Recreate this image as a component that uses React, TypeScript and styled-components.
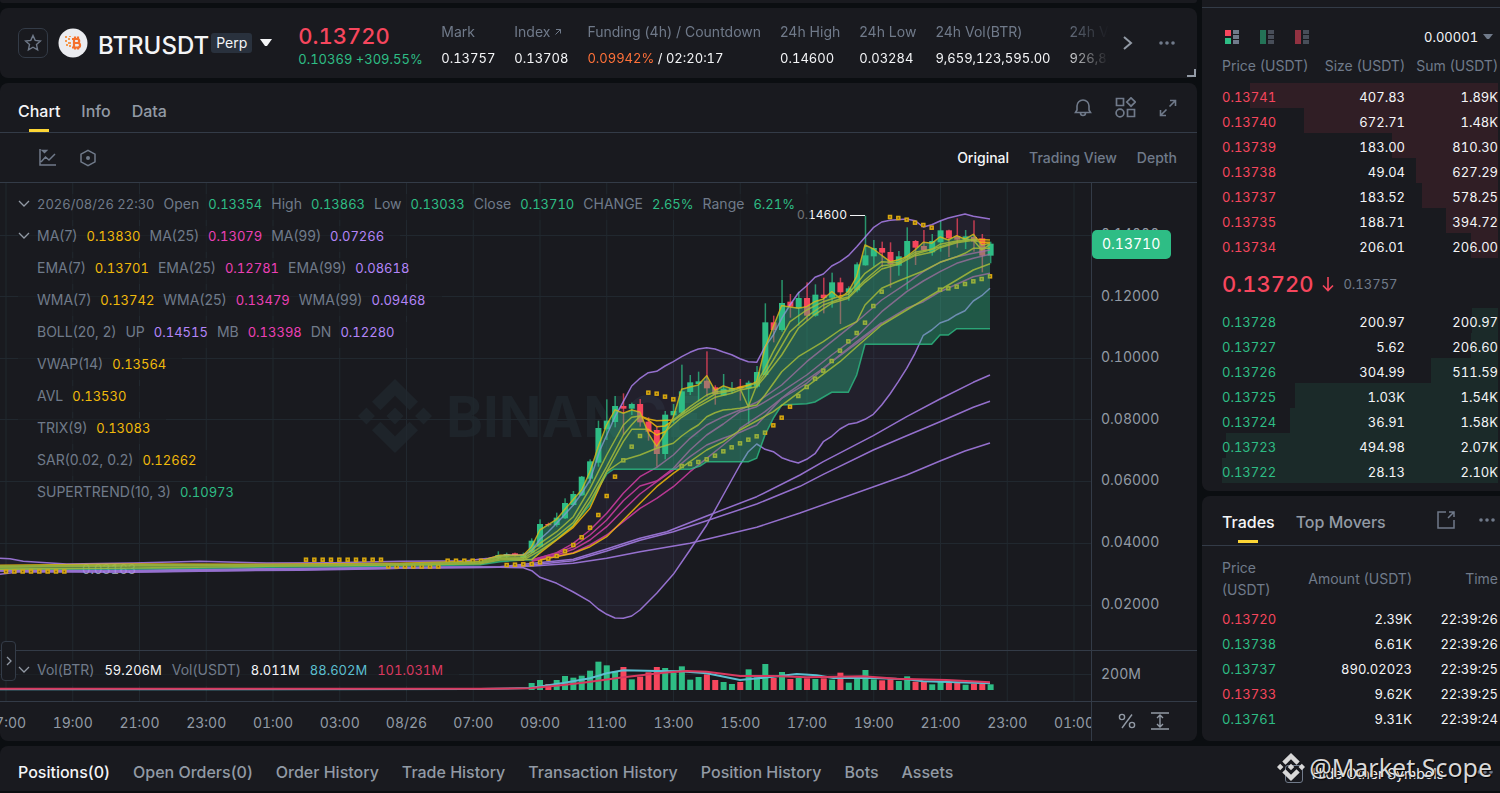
import React from "react";
import styled, { createGlobalStyle } from "styled-components";

const up = "#2ebd85", down = "#f6465d", yellow = "#f0b90b", purple = "#b385f8", pink = "#eb40b5";
const muted = "#707a8a", muted2 = "#929aa5", line = "#333b47", panel = "#191a1f", white = "#f4f5f7";

const Global = createGlobalStyle`
  * { box-sizing: border-box; }
  body { margin: 0; background: #0b0e11; color: ${white}; font: 14px/20px Inter, "Liberation Sans", sans-serif; overflow-x: hidden; }
  button { font: inherit; color: inherit; background: none; border: 0; padding: 0; margin: 0; }
  a { color: inherit; text-decoration: none; }
  svg { display: block; }
  table { border-collapse: collapse; }
`;
const digits = `font-size: 13px; font-variant-numeric: tabular-nums;`;
const bigDigits = `font-size: 22px; font-weight: 500; font-variant-numeric: tabular-nums;`;

const Page = styled.div`display: flex; flex-direction: column; gap: 5px; min-height: 100vh;`;
const Upper = styled.div`display: flex; gap: 5px;`;
const Main = styled.main`flex: 1; min-width: 0; display: flex; flex-direction: column; gap: 5px;`;
const Side = styled.aside`width: 298px; flex: none; display: flex; flex-direction: column; gap: 5px;`;
const Panel = styled.section`background: ${panel}; border-radius: 8px; position: relative; overflow: hidden;`;
const Strip = styled.div`height: 3px; background: ${panel}; border-radius: 0 0 8px 8px;`;

const Ticker = styled(Panel)`display: flex; align-items: center; height: 70px; padding: 0 21px 0 18px; overflow: visible;`;
const StarButton = styled.button`width: 30px; height: 30px; border: 1px solid ${line}; border-radius: 7px; display: grid; place-items: center; color: ${muted};`;
const CoinLogo = styled.svg`margin-left: 10px;`;
const Symbol = styled.h1`margin: 5px 2px 0 10px; font-size: 24px; line-height: 32px; font-weight: 500;`;
const Tag = styled.span`background: #29313d; border-radius: 3px; padding: 0 5px; height: 20px;`;
const SymbolButton = styled.button`margin: 0 26px 0 8px;`;
const Last = styled.div`width: 123px; margin-right: 20px; padding-top: 5px; color: ${up}; white-space: nowrap; ${digits}`;
const LastPrice = styled.div`${bigDigits} line-height: 26px; color: ${down};`;
const Stats = styled.dl`flex: 1; min-width: 0; margin: 0; padding-top: 4px; display: flex; gap: 19px; overflow: hidden; white-space: nowrap; mask-image: linear-gradient(to right, #000 calc(100% - 46px), transparent);`;
const Stat = styled.div`flex: none; dt { color: ${muted}; margin-bottom: 6px; display: flex; gap: 5px; } dd { margin: 0; ${digits} }`;
const Orange = styled.span`color: #ff7139;`;
const IconButton = styled.button<{ $gap?: number }>`margin-left: ${p => p.$gap ?? 0}px; color: ${muted};`;
const Corner = styled.span`position: absolute; right: 1px; bottom: 1px; width: 9px; height: 8px; border: solid ${muted2}; border-width: 0 2px 2px 0;`;

const TabBar = styled.div`display: flex; align-items: center; height: 50px; padding: 6px 20px 0 18px; border-bottom: 1px solid ${line}; > button { margin-bottom: 6px; }`;
const TradeBar = styled(TabBar)`padding: 4px 4px 2px 20px; > button { margin-bottom: 4px; }`;
const Tabs = styled.nav<{ $gap?: number }>`display: flex; gap: ${p => p.$gap ?? 21}px; flex: 1; align-self: stretch; font-size: 16px; font-weight: 500; white-space: nowrap;`;
const Tab = styled.a<{ $on?: boolean; $plain?: boolean }>`
  display: flex; align-items: center; position: relative; color: ${p => (p.$on ? white : muted2)};
  &::after { content: ""; display: ${p => (p.$on && !p.$plain ? "block" : "none")}; position: absolute; bottom: 0; left: calc(50% - 10px); width: 20px; height: 3px; background: #fcd535; }
`;
const ToolBar = styled.div`display: flex; align-items: center; height: 50px; padding: 0 20px 0 37px; border-bottom: 1px solid ${line}; color: ${muted};`;
const ModeLink = styled.a<{ $on?: boolean }>`margin-left: 20px; font-weight: 500; color: ${p => (p.$on ? white : muted)};`;
const Spacer = styled.div`flex: 1;`;

const ChartBox = styled.div`position: relative; height: 558px; overflow: hidden;`;
const Plot = styled.svg`width: 100%; height: 558px; text { font-family: Inter, "Liberation Sans", sans-serif; font-size: 14px; font-variant-numeric: tabular-nums; }`;
const Legend = styled.div<{ $top: number }>`position: absolute; left: 18px; top: ${p => p.$top}px; display: flex; flex-direction: column; gap: 6px; align-items: flex-start;`;
const LegendRow = styled.div<{ $fold?: boolean; $gap?: number }>`display: flex; gap: ${p => p.$gap ?? 9}px; padding: 0 16px 6px ${p => (p.$fold ? 0 : 19)}px; background: rgba(25, 26, 31, 0.6); color: ${muted}; white-space: nowrap; svg { margin: 5px ${p => 7 - (p.$gap ?? 9)}px 0 0; }`;
const Value = styled.span<{ $c: string }>`color: ${p => p.$c}; ${digits}`;
const Expander = styled.button`position: absolute; left: 1px; top: 458px; width: 15px; height: 40px; border: 1px solid ${line}; border-radius: 4px; background: ${panel}; color: ${muted2}; display: grid; place-items: center;`;

const BookPanel = styled(Panel)`height: 491px; padding: 0 2px 0 20px; border-radius: 0 0 0 8px;`;
const BookTop = styled.div`height: 8px; border-bottom: 1px solid ${line}; margin: 0 -2px 0 -20px;`;
const BookTools = styled.div`display: flex; align-items: center; gap: 20px; height: 44px; padding: 14px 5px 0 3px;`;
const Precision = styled.select`appearance: none; border: 0; background: none; color: ${white}; font: inherit; ${digits} padding: 0; width: 54px;`;
const PrecisionLabel = styled.label`display: flex; align-items: center; gap: 5px; margin-left: auto;`;
const Book = styled.table`
  width: 100%; table-layout: fixed;
  th { font-weight: 400; color: ${muted}; text-align: right; height: 31px; padding: 0 0 4px; white-space: nowrap; &:first-child { text-align: left; } }
  td { padding: 2px 0 0; height: 25px; text-align: right; ${digits} &:first-child { text-align: left; } }
`;
const Level = styled.tr<{ $c: string; $bg: string }>`td:first-child { color: ${p => p.$c}; } background-image: linear-gradient(${p => p.$bg}, ${p => p.$bg}); background-repeat: no-repeat; background-position: right;`;
const Mid = styled.div`display: flex; align-items: center; height: 50px; padding-top: 2px; gap: 8px; color: ${muted}; ${digits} strong { ${bigDigits} color: ${down}; }`;

const TradesPanel = styled(Panel)`flex: 1; border-radius: 8px 0 0 8px;`;
const TradesTable = styled.table`
  width: 276px; margin: 11px 0 0 20px; table-layout: fixed;
  th { font-weight: 400; color: ${muted}; line-height: 22px; height: 49px; padding: 11px 0 0; text-align: right; vertical-align: top; white-space: nowrap; }
  th:first-child { text-align: left; white-space: normal; padding-top: 0; }
  td { height: 25px; padding: 0; text-align: right; ${digits} }
  td:first-child { text-align: left; }
`;

const Bottom = styled(Panel)`height: 45px; border-radius: 8px 0 0 0; display: flex; align-items: center; padding: 7px 6px 0 18px;`;
const Hide = styled.label`display: flex; align-items: center; gap: 9px; margin-right: 12px; padding-top: 3px; white-space: nowrap; input { appearance: none; margin: 0; width: 18px; height: 18px; border: 1px solid ${muted}; border-radius: 3px; }`;
const Credit = styled.div`position: absolute; right: 8px; top: 5px; display: flex; align-items: center; gap: 4px; font: 25px/32px "Noto Sans", sans-serif; color: #d8d8d8; text-shadow: 1px 1px 1px #000; white-space: nowrap;`;

/* price chart data: candle slot, body top and bottom, wick top and bottom, rising or not */
const X = (k: number) => 540 + k * 8.345;
const a9 = (y: number) => 330 + y / 3;
const a10 = (y: number) => 195 + y / 3;
const early = [
  [-5, 675, 684, 664, 688, 1], [-4, 672, 680, 668, 684, 1], [-3, 670, 676, 668, 680, 0], [-2, 674, 684, 668, 688, 1],
  [-1, 632, 668, 625, 670, 1], [0, 582, 650, 568, 650, 1], [1, 582, 586, 578, 590, 0], [2, 563, 585, 548, 590, 1], [3, 519, 565, 505, 567, 1],
  [4, 492, 525, 483, 527, 1], [5, 440, 496, 438, 498, 1], [6, 394, 446, 388, 460, 1], [7, 294, 398, 272, 410, 1], [8, 272, 298, 208, 330, 1],
  [9, 228, 276, 198, 292, 1], [10, 228, 236, 190, 314, 0], [11, 222, 236, 218, 255, 1], [12, 222, 277, 207, 290, 0], [13, 275, 305, 262, 332, 0],
  [14, 300, 372, 290, 410, 0], [15, 254, 372, 243, 388, 1], [16, 243, 256, 222, 280, 1], [17, 184, 248, 104, 252, 1], [18, 157, 186, 135, 195, 1],
  [19, 154, 162, 125, 214, 1], [20, 152, 175, 64, 200, 0], [21, 172, 192, 166, 224, 0], [22, 176, 196, 132, 198, 1], [23, 174, 182, 156, 190, 1],
  [24, 170, 176, 147, 212, 0], [25, 158, 175, 152, 282, 1], [26, 126, 170, 108, 175, 1],
];
const late = [
  [27, 382, 540, 325, 545, 1], [28, 382, 405, 362, 442, 0], [29, 324, 405, 255, 410, 1], [30, 320, 335, 297, 368, 0], [31, 309, 340, 290, 392, 1],
  [32, 309, 362, 262, 378, 0], [33, 299, 362, 268, 365, 1], [34, 299, 309, 248, 355, 0], [35, 262, 308, 233, 338, 1], [36, 262, 292, 248, 387, 0],
  [37, 280, 292, 274, 317, 1], [38, 208, 286, 202, 292, 1], [39, 181, 211, 62, 212, 1], [40, 159, 184, 135, 215, 1], [41, 159, 173, 140, 217, 0],
  [42, 171, 207, 142, 278, 0], [43, 184, 212, 168, 242, 1], [44, 138, 188, 97, 284, 1], [45, 138, 158, 135, 210, 0], [46, 153, 166, 105, 168, 0],
  [47, 138, 172, 117, 182, 1], [48, 106, 142, 78, 170, 1], [49, 106, 130, 104, 186, 0], [50, 124, 134, 70, 158, 0], [51, 124, 136, 105, 162, 1],
  [52, 126, 140, 76, 170, 0], [53, 130, 182, 117, 232, 0], [54, 146, 182, 140, 205, 1],
];
const candles = [
  ...early.map(([k, t, b, h, l, g]) => ({ k, t: a9(t), b: a9(b), h: a9(h), l: a9(l), g })),
  ...late.map(([k, t, b, h, l, g]) => ({ k, t: a10(t), b: a10(b), h: a10(h), l: a10(l), g })),
];

/* polylines: three stretches, each with its own origin, in thirds of a pixel */
const seg = (ox: number, oy: number, s: string) =>
  s.trim().split(/\s+/).filter(Boolean).map(p => { const [x, y] = p.split(",").map(Number); return `${(ox + x / 3).toFixed(1)},${(oy + y / 3).toFixed(1)}`; }).join(" ");
const path = (l: string, m: string, r: string) => [seg(0, 520, l), seg(500, 330, m), seg(740, 195, r)].filter(Boolean).join(" ");

const bollUp = path("0,115 30,116 70,124 140,128 200,132 400,129 600,124 800,129 1000,128 1200,124 1400,122 1465,115",
  "20,675 70,675 95,662 120,628 145,605 170,580 195,553 220,525 245,490 270,450 300,360 345,260 370,215 395,168 420,145 445,128 470,124 495,108 520,95 545,80 570,67 595,57 620,53 645,57 670,66 695,74",
  "0,491 25,500 50,502 75,455 100,420 125,370 150,330 175,294 200,272 225,247 250,237 275,213 300,200 325,182 350,155 375,127 400,98 425,81 450,76 500,72 525,77 550,96 575,89 600,78 625,69 675,57 700,64 750,72");
const bollDn = path("0,163 60,155 400,157 700,152 900,151 1150,146 1300,142 1500,142",
  "70,713 95,722 120,742 170,760 220,786 270,815 295,837 320,853 345,864 370,865 395,858 420,840 470,790 520,733 570,660 620,585 670,495 720,405 745,365",
  "50,747 75,763 100,770 125,788 150,797 175,804 200,793 225,776 250,740 275,724 300,702 325,688 350,683 375,673 400,658 425,630 450,597 475,560 500,520 525,475 550,421 575,405 600,384 625,375 650,359 675,347 700,318 725,302 750,280");
const trend = path("0,148 400,147 800,142 1200,138 1440,134", "0,695 70,690 95,690 120,665 170,628 220,585 270,525 295,475 320,432 340,418 570,418 600,408 620,395 740,395",
  "25,800 50,790 75,720 100,670 125,630 200,626 225,621 275,592 325,592 350,540 375,448 575,448 600,420 625,420 650,401 750,401");
const price = path("0,136 400,132 800,133 1200,130 1440,124", "0,676 70,676 95,650 120,600 170,568 195,538 245,480 270,425 295,350 320,285 345,240 370,250 395,240 420,247 445,310 470,350 495,310 520,262 545,178 595,165 620,137 645,182 670,168 695,176 720,175",
  "25,572 50,560 75,460 100,395 125,332 175,340 200,335 225,320 250,312 275,290 300,310 325,290 350,245 375,150 400,162 450,200 475,195 500,185 525,165 550,142 575,145 600,126 625,135 650,122 675,133 700,118 725,150 750,145");
const yellowLines = [
  price,
  path("0,139 400,134 800,135 1200,131 1440,126", "0,680 70,682 120,640 170,605 220,560 270,475 320,375 370,285 395,262 420,258 445,267 470,272 520,270 570,230 620,195 645,186 695,180",
    "0,576 50,565 75,520 100,470 150,380 200,345 250,320 300,303 325,298 375,235 425,200 475,203 525,172 575,163 600,148 650,138 700,133 750,135"),
  path("0,142 400,138 800,137 1200,133 1440,130", "0,684 70,686 120,652 170,618 220,578 270,500 320,410 370,315 395,284 420,258 445,270 470,290 495,288 545,255 595,222 645,192 695,182",
    "0,580 25,635 50,570 75,535 100,495 150,410 200,365 250,330 300,312 325,306 375,255 425,212 475,207 525,182 575,172 600,158 650,143 700,136 725,142 750,142"),
  path("0,140 400,136 800,136 1200,132 1440,129", "0,686 70,690 120,662 170,628 220,588 270,515 320,425 370,335 395,298 445,298 470,315 495,305 545,262 595,230 645,202 695,190",
    "0,585 50,575 75,545 125,480 175,400 225,358 275,325 325,310 375,262 425,222 475,208 525,178 600,155 650,140 700,135 725,165 750,148"),
  path("0,147 400,144 800,139 1200,135 1440,131", "0,690 95,688 170,630 220,592 270,535 320,425 370,390 420,375 470,355 520,340 545,318 570,300 595,285 620,260 645,248 670,240 695,238",
    "0,640 50,630 75,600 125,530 175,485 250,440 300,405 350,380 375,330 425,280 475,258 550,228 600,202 650,185 675,175 700,160 750,160"),
  path("", "120,690 220,670 270,650 320,620 370,570 420,520 470,470 520,430 570,395 620,360 670,335", "0,705 100,650 200,575 300,500 350,455 425,390 500,345 600,285 650,255 700,225 750,206"),
];
const pinkLines = [
  path("", "95,690 170,668 220,640 270,600 320,550 370,490 420,440 470,412 520,375 570,325 620,285 670,260", "0,645 50,622 125,570 200,500 275,440 350,380 425,315 500,265 550,230 600,202 650,185 700,175 750,165"),
  path("", "95,690 170,670 220,650 270,615 320,570 370,512 420,468 470,453 520,415 570,360 620,315 670,282", "0,650 50,635 125,590 200,540 275,480 350,425 425,350 500,290 550,258 600,230 650,205 700,190 750,178"),
  path("", "95,692 170,675 220,658 270,630 320,590 370,540 420,492 470,455 520,420 570,380 620,345 670,325", "0,712 50,690 125,610 200,565 275,500 350,445 425,385 500,340 550,320 600,290 650,268 700,245 750,235"),
  path("", "95,694 220,668 270,645 320,615 370,575 420,535 470,505 520,470 570,425 620,385 670,345 710,312", "0,700 75,650 150,590 250,520 350,440 425,383"),
];
const purpleLines = [
  path("0,150 400,151 800,146 1200,142 1500,140", "100,700 220,688 320,657 420,625 500,605 620,558 770,500", "180,840 250,800 400,722 500,665 600,612 700,562 750,540"),
  path("0,152 400,153 800,148 1200,144 1500,142", "100,704 220,692 320,663 420,631 520,605 620,572 770,522", "180,874 250,838 400,765 500,722 600,680 700,637 750,619"),
  path("0,153 400,155 800,150 1200,145 1500,142", "100,708 220,700 320,685 420,665 570,640 770,592", "180,954 500,840 600,798 675,768 750,744"),
];
const dots = [
  ...[18, 43, 68, 93, 118, 143, 168, 193].map(x => [x / 3, 571.5]),
  ...Array.from({ length: 10 }, (_, i) => [(918 + i * 25) / 3, 559.7]),
  ...Array.from({ length: 5 }, (_, i) => [(1343 + i * 25) / 3, 560.7]),
  ...Array.from({ length: 7 }, (_, i) => [(1165 + i * 25) / 3, 566.5]),
  ..."20,705 45,704 70,703 95,702 120,697 145,686 170,678 195,664 220,645 245,622 270,593 295,555 320,498 345,440 370,391 395,350 420,318 445,188 470,191 495,200 520,208 545,408 570,402 595,396 620,388 645,377 670,364 695,352 720,340 745,329 770,319 795,308 820,286 845,263 870,230 895,198"
    .split(" ").map(p => { const [x, y] = p.split(",").map(Number); return [500 + x / 3, 330 + y / 3]; }),
  ..."200,576 225,551 250,527 275,498 300,467 325,439 350,414 375,383 400,333 425,290 450,66 475,69 500,74 525,83 550,90 575,98 600,284 625,280 650,275 675,267 700,259 725,252 750,244"
    .split(" ").map(p => { const [x, y] = p.split(",").map(Number); return [740 + x / 3, 195 + y / 3]; }),
];
const volumes = "609g 600g 612r 600g 588g 593g 587g 572g 545g 556g 574g 561r 598g 590r 577r 561r 564g 578g 559g 599g 591g 583r 600r 606g 612g 606r 568g 592g 552g 594r 576g 597r 594g 595r 597g 595r 599g 578r 608g 594g 570g 598g 601r 598r 603g 589g 605r 605r 613g 606g 608r 609r 614g 611r 612r 613g".split(" ");
const volBlue = seg(480, 480, "-1440,628 0,627 150,624 250,609 330,595 380,580 430,571 530,573 600,574 680,580 780,600 880,590 950,582 1010,586 1060,594 1180,594 1280,598 1330,604 1530,610");
const volRed = seg(480, 480, "-1440,626 0,626 150,625 250,615 320,607 430,592 550,578 620,573 680,575 780,588 880,588 980,592 1150,589 1250,596 1400,600 1530,607");
const reverse = (s: string) => s.split(" ").reverse().join(" ");
const times = ["17:00", "19:00", "21:00", "23:00", "01:00", "03:00", "08/26", "07:00", "09:00", "11:00", "13:00", "15:00", "17:00", "19:00", "21:00", "23:00", "01:00"];

const diamond = "M38.2 53.2 63 28.4l24.8 24.8 14.4-14.4L63 0 23.8 38.8zM0 63l14.4-14.4L28.8 63 14.4 77.4zM38.2 72.8 63 97.6l24.8-24.8 14.4 14.4L63 126 23.8 87.2zM97.2 63l14.4-14.4L126 63l-14.4 14.4zM77.6 63 63 48.4 48.4 63 63 77.6z";
const Fold = () => <svg width="12" height="9" fill="none" stroke={muted2} strokeWidth="1.3"><path d="M1 2l5 5 5-5" /></svg>;
const Dots = () => <svg width="18" height="6" fill={muted}><circle cx="3" cy="3" r="1.8" /><circle cx="9" cy="3" r="1.8" /><circle cx="15" cy="3" r="1.8" /></svg>;

const PriceChart = () => (
  <Plot viewBox="0 183 1197 558" preserveAspectRatio="xMaxYMin slice" role="img" aria-label="Price chart">
    <g fill="#1e242a">
      <svg x="358" y="379" width="74" height="74" viewBox="0 0 126 126"><path d={diamond} /></svg>
      <text x="446" y="437" style={{ fontSize: 56, fontWeight: 700 }}>BINANCE</text>
    </g>
    <g stroke="#21282f">
      {times.map((_, i) => <path key={i} d={`M${6 + i * 66.75} 183V701`} />)}
      {[235, 296, 358, 419, 481, 543, 605, 674].map(y => <path key={y} d={`M0 ${y + 0.5}H1091`} />)}
    </g>
    <text x="82" y="574" fill={muted2} style={{ fontSize: 13 }}>0.03163</text>
    <polygon points={`${bollUp} ${reverse(bollDn)}`} fill={purple} opacity=".06" />
    {candles.map(c => (
      <g key={c.k} fill={c.g ? up : down}>
        <rect x={X(c.k) - 0.7} y={c.h} width="1.5" height={c.l - c.h} opacity=".75" />
        <rect x={X(c.k) - 3} y={c.t} width="6" height={c.b - c.t} />
      </g>
    ))}
    <g fill="none" strokeWidth="1.5" strokeLinejoin="round">
      <g stroke={pink} opacity=".75">{pinkLines.map((p, i) => <polyline key={i} points={p} />)}</g>
      <g stroke={purple} opacity=".8">{[...purpleLines, bollUp, bollDn].map((p, i) => <polyline key={i} points={p} />)}</g>
    </g>
    <polyline points={trend} fill="none" stroke={up} strokeWidth="1.5" opacity=".8" />
    <g fill="none" strokeWidth="1.5" strokeLinejoin="round" stroke={yellow} opacity=".85">{yellowLines.map((p, i) => <polyline key={i} points={p} />)}</g>
    {dots.map(([x, y], i) => <rect key={i} x={x - 1.5} y={y - 1.5} width="3" height="3" fill="#7a5f14" stroke="#d9a80f" strokeWidth="1.5" />)}
    <polygon points={`${price} ${reverse(trend)}`} fill={up} opacity=".38" />
    <path d="M850 215.5H865" stroke={white} />
    <text x="797" y="219" fill={white} style={{ fontSize: 12 }}>0.14600</text>
    {volumes.map((v, i) => {
      const y = 480 + parseInt(v) / 3;
      return <rect key={i} x={X(i - 1) - 3} y={y} width="6" height={690 - y} fill={v.endsWith("g") ? up : down} />;
    })}
    <g fill="none" strokeWidth="2"><polyline points={volBlue} stroke="#5bbfd0" /><polyline points={volRed} stroke="#d9395f" /></g>
    <path d="M0 650.5H1197M0 701.5H1197M1091.5 183V741" stroke={line} />
    <g fill={muted2}>
      {["0.14000", "0.12000", "0.10000", "0.08000", "0.06000", "0.04000", "0.02000"].map((t, i) => <text key={t} x="1101" y={Math.round(239 + i * 61.6)}>{t}</text>)}
      <text x="1101" y="679">200M</text>
      <svg x="0" y="702" width="1091" height="39" viewBox="0 702 1091 39">
        {times.map((t, i) => <text key={i} x={6 + i * 66.75} y="728" textAnchor="middle">{t}</text>)}
      </svg>
    </g>
    <g fill="none" stroke={muted2} strokeWidth="1.4">
      <circle cx="1122" cy="717" r="2.6" /><circle cx="1132" cy="725" r="2.6" /><path d="M1132 714.500L1122 728" />
      <path d="M1151 713h18M1151 729h18M1160 715.500v11M1157 718l3-3 3 3M1157 724l3 3 3-3" />
    </g>
    <rect x="1092" y="230" width="79" height="29" rx="5" fill={up} />
    <text x="1102" y="249" fill="#fff">0.13710</text>
  </Plot>
);

type Item = [string, string, string];
const indicators: Item[][] = [
  [["MA(7)", "0.13830", yellow], ["MA(25)", "0.13079", pink], ["MA(99)", "0.07266", purple]],
  [["EMA(7)", "0.13701", yellow], ["EMA(25)", "0.12781", pink], ["EMA(99)", "0.08618", purple]],
  [["WMA(7)", "0.13742", yellow], ["WMA(25)", "0.13479", pink], ["WMA(99)", "0.09468", purple]],
  [["BOLL(20, 2)", "", ""], ["UP", "0.14515", purple], ["MB", "0.13398", pink], ["DN", "0.12280", purple]],
  [["VWAP(14)", "0.13564", yellow]], [["AVL", "0.13530", yellow]], [["TRIX(9)", "0.13083", yellow]], [["SAR(0.02, 0.2)", "0.12662", yellow]], [["SUPERTREND(10, 3)", "0.10973", up]],
];
const candleInfo: Item[] = [["", "2026/08/26 22:30", muted], ["Open", "0.13354", up], ["High", "0.13863", up], ["Low", "0.13033", up], ["Close", "0.13710", up], ["CHANGE", "2.65%", up], ["Range", "6.21%", up]];
const volInfo: Item[] = [["Vol(BTR)", "59.206M", white], ["Vol(USDT)", "8.011M", white], ["", "88.602M", "#5bbfd0"], ["", "101.031M", "#d9395f"]];
const Items = ({ items }: { items: Item[] }) => (
  <>{items.map(([l, v, c]) => <React.Fragment key={l + v}>{l && <span>{l}</span>}{v && <Value $c={c}>{v}</Value>}</React.Fragment>)}</>
);

const asks = [["0.13741", "407.83", "1.89K", 248], ["0.13740", "672.71", "1.48K", 194], ["0.13739", "183.00", "810.30", 106], ["0.13738", "49.04", "627.29", 82], ["0.13737", "183.52", "578.25", 76], ["0.13735", "188.71", "394.72", 52], ["0.13734", "206.01", "206.00", 27]];
const bids = [["0.13728", "200.97", "200.97", 26], ["0.13727", "5.62", "206.60", 27], ["0.13726", "304.99", "511.59", 67], ["0.13725", "1.03K", "1.54K", 203], ["0.13724", "36.91", "1.58K", 208], ["0.13723", "494.98", "2.07K", 272], ["0.13722", "28.13", "2.10K", 276]];
const trades = [["0.13720", "2.39K", "22:39:26", down], ["0.13738", "6.61K", "22:39:26", up], ["0.13737", "890.02023", "22:39:25", up], ["0.13733", "9.62K", "22:39:25", down], ["0.13761", "9.31K", "22:39:24", up]];
const stats: [string, React.ReactNode][] = [
  ["Mark", "0.13757"],
  ["Index", "0.13708"],
  ["Funding (4h) / Countdown", <><Orange>0.09942%</Orange> / 02:20:17</>],
  ["24h High", "0.14600"], ["24h Low", "0.03284"], ["24h Vol(BTR)", "9,659,123,595.00"], ["24h Vol(USDT)", "926,829,140.51"],
];
const Levels = ({ rows, c, bg }: { rows: (string | number)[][]; c: string; bg: string }) => (
  <>{rows.map(([p, s, sum, w]) => <Level key={p} $c={c} $bg={bg} style={{ backgroundSize: `${(Number(w) / 276) * 100}% 100%` }}><td>{p}</td><td>{s}</td><td>{sum}</td></Level>)}</>
);
const Col = styled.col<{ $w: number }>`width: ${p => p.$w}px;`;
const Cols = () => <colgroup><Col $w={90} /><Col $w={93} /><Col $w={93} /></colgroup>;
const BookIcon = ({ kind }: { kind: "both" | "buy" | "sell" }) => (
  <svg width="15" height="14" opacity={kind === "both" ? 1 : 0.55}>
    {kind === "both" ? <><rect width="6" height="6" fill={down} /><rect y="8" width="6" height="6" fill={up} /></> : <rect width="6" height="14" fill={kind === "buy" ? up : down} />}
    <path d="M8 0h6v4H8zM8 5h6v4H8zM8 10h6v4H8z" fill={muted} />
  </svg>
);

export default function App() {
  return (
    <>
      <Global />
      <Page>
        <Upper>
          <Main>
            <Strip />
            <Ticker>
              <StarButton aria-label="Favourite"><svg width="18" height="18" viewBox="0 0 18 18" fill="none" stroke="currentColor" strokeWidth="1.4"><path d="M9 1.5l2.2 4.9 5.3.6-4 3.6 1.1 5.3L9 13.2l-4.6 2.7 1.1-5.3-4-3.6 5.3-.6z" /></svg></StarButton>
              <CoinLogo width="30" height="30" viewBox="0 0 30 30">
                <circle cx="15" cy="15" r="14.5" fill="#ebecf0" />
                <g fill="none" stroke="#f4702c" strokeWidth="2.2"><path d="M14 11h5.2a1.9 1.9 0 0 1 0 4H15h4.8a2.2 2.2 0 0 1 0 4.500H14M16 10v10M17 8.500v2M20 8.500v2M17 19.500v2M20 19.500v2" /></g>
                <path d="M7 8h2v2H7zM10 10h2v2h-2zM7 12h2v2H7zM10 14h3v2h-3zM8 16h2v2H8zM11 17h2v2h-2zM11 8h2v1h-2z" fill="#f59a50" />
              </CoinLogo>
              <Symbol>BTRUSDT</Symbol>
              <Tag>Perp</Tag>
              <SymbolButton aria-label="Choose symbol"><svg width="12" height="8" fill={white}><path d="M0 0h12L7 7H5z" /></svg></SymbolButton>
              <Last><LastPrice>0.13720</LastPrice>0.10369 +309.55%</Last>
              <Stats>
                {stats.map(([l, v]) => <Stat key={l}><dt>{l}{l === "Index" && <svg width="6" height="18" fill="none" stroke={muted}><path d="M1 7.500h4.500v4M5.500 7.500l-5 5" /></svg>}</dt><dd>{v}</dd></Stat>)}
              </Stats>
              <IconButton $gap={14} aria-label="Next"><svg width="10" height="16" fill="none" stroke={muted2} strokeWidth="2"><path d="M1 2l7 6-7 6" /></svg></IconButton>
              <IconButton $gap={25} aria-label="More"><Dots /></IconButton>
              <Corner />
            </Ticker>
            <Panel>
              <TabBar>
                <Tabs><Tab href="#chart" $on>Chart</Tab><Tab href="#info">Info</Tab><Tab href="#data">Data</Tab></Tabs>
                <IconButton aria-label="Alerts"><svg width="18" height="18" viewBox="0 0 18 18" fill="none" stroke="currentColor" strokeWidth="1.6"><path d="M1.500 13.500h15L15 11V7a6 6 0 0 0-12 0v4zM6.500 14a2.500 2.500 0 0 0 5 0" /></svg></IconButton>
                <IconButton $gap={23} aria-label="Layout"><svg width="21" height="21" viewBox="0 0 21 21" fill="none" stroke="currentColor" strokeWidth="1.7"><path d="M1.500 1.500h7v7h-7zM12.500 12.500h7v7h-7zM16 .8l4.200 4.200L16 9.200 11.800 5z" /><circle cx="5" cy="16" r="3.900" /></svg></IconButton>
                <IconButton $gap={23} aria-label="Expand"><svg width="18" height="18" viewBox="0 0 18 18" fill="none" stroke="currentColor" strokeWidth="1.600"><path d="M11 1.500h5.500V7M16.500 1.500l-6 6M7 16.500H1.500V11M1.500 16.500l6-6" /></svg></IconButton>
              </TabBar>
              <ToolBar>
                <IconButton $gap={1} aria-label="Indicators"><svg width="19" height="19" viewBox="0 0 19 19" fill="none" stroke="currentColor" strokeWidth="1.500"><path d="M2 1v16h16M3 14l4.500-5 3.500 3 6-6M4.500 2.500h4L6.500 4.500z" /></svg></IconButton>
                <IconButton $gap={22} aria-label="Settings"><svg width="18" height="18" viewBox="0 0 18 18" fill="none" stroke="currentColor" strokeWidth="1.500"><path d="M9 1.300l7 3.900v7.600l-7 3.900-7-3.900V5.200z" /><circle cx="9" cy="9" r="2" fill="currentColor" stroke="none" /></svg></IconButton>
                <Spacer />
                <ModeLink href="#original" $on>Original</ModeLink><ModeLink href="#tv">Trading View</ModeLink><ModeLink href="#depth">Depth</ModeLink>
              </ToolBar>
              <ChartBox>
                <PriceChart />
                <Legend $top={11}>
                  <LegendRow $fold><Fold /><Items items={candleInfo} /></LegendRow>
                  {indicators.map((r, i) => <LegendRow key={i} $fold={i === 0}>{i === 0 && <Fold />}<Items items={r} /></LegendRow>)}
                </Legend>
                <Legend $top={477}><LegendRow $fold $gap={10}><Fold /><Items items={volInfo} /></LegendRow></Legend>
                <Expander aria-label="Expand tools"><svg width="6" height="10" fill="none" stroke="currentColor" strokeWidth="1.300"><path d="M1 1l4 4-4 4" /></svg></Expander>
              </ChartBox>
            </Panel>
          </Main>
          <Side>
            <BookPanel>
              <BookTop />
              <BookTools>
                <BookIcon kind="both" /><BookIcon kind="buy" /><BookIcon kind="sell" />
                <PrecisionLabel><Precision aria-label="Price step"><option>0.00001</option></Precision><svg width="10" height="6" fill={muted}><path d="M0 0h10L6 5H4z" /></svg></PrecisionLabel>
              </BookTools>
              <Book><Cols /><thead><tr><th>Price (USDT)</th><th>Size (USDT)</th><th>Sum (USDT)</th></tr></thead><tbody><Levels rows={asks} c={down} bg="#301e25" /></tbody></Book>
              <Mid><strong>0.13720</strong><svg width="14" height="16" fill="none" stroke={down} strokeWidth="1.600"><path d="M7 1v14M2 9.500L7 14.500l5-5" /></svg>0.13757</Mid>
              <Book><Cols /><tbody><Levels rows={bids} c={up} bg="#1b2a29" /></tbody></Book>
            </BookPanel>
            <TradesPanel>
              <TradeBar>
                <Tabs><Tab href="#trades" $on>Trades</Tab><Tab href="#movers">Top Movers</Tab></Tabs>
                <IconButton aria-label="Open"><svg width="18" height="18" viewBox="0 0 18 18" fill="none" stroke="currentColor" strokeWidth="1.500"><path d="M9 1H1v16h16V9M12 1h5v5M17 1l-6 6" /></svg></IconButton>
                <IconButton $gap={23} aria-label="More"><Dots /></IconButton>
              </TradeBar>
              <TradesTable>
                <colgroup><Col $w={70} /><Col $w={120} /><Col $w={86} /></colgroup>
                <thead><tr><th>Price (USDT)</th><th>Amount (USDT)</th><th>Time</th></tr></thead>
                <tbody>{trades.map(([p, a, t, c]) => <tr key={p}><td><Value $c={c}>{p}</Value></td><td>{a}</td><td>{t}</td></tr>)}</tbody>
              </TradesTable>
            </TradesPanel>
          </Side>
        </Upper>
        <Bottom>
          <Tabs $gap={23}>{["Positions(0)", "Open Orders(0)", "Order History", "Trade History", "Transaction History", "Position History", "Bots", "Assets"].map((t, i) => <Tab key={t} href="#account" $on={i === 0} $plain>{t}</Tab>)}</Tabs>
          <Hide><input type="checkbox" />Hide Other Symbols</Hide>
          <IconButton $gap={20} aria-label="More"><Dots /></IconButton>
          <Credit><svg width="28" height="28" viewBox="0 0 126 126" fill="#d8d8d8"><path d={diamond} /></svg>@Market Scope</Credit>
        </Bottom>
      </Page>
    </>
  );
}
